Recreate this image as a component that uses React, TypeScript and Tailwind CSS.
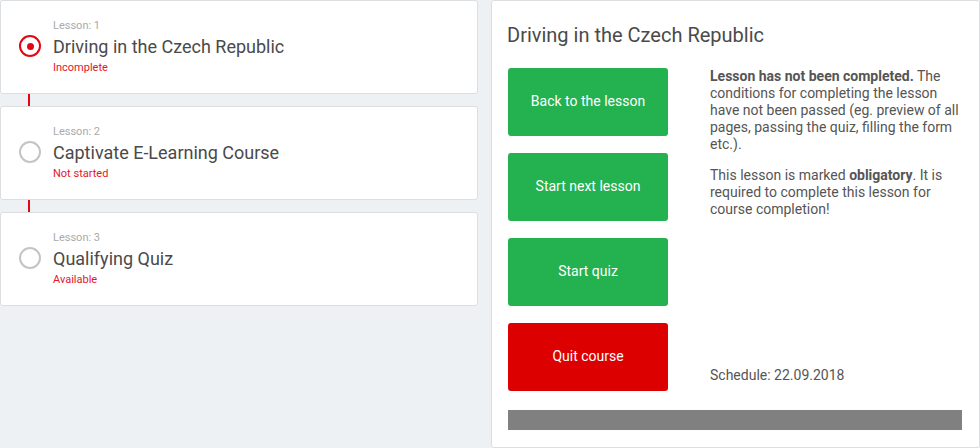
import React from 'react';

const FONT = { fontFamily: 'Roboto, "Liberation Sans", sans-serif' };

type Lesson = { no: number; title: string; status: string; active?: boolean };

const LESSONS: Lesson[] = [
  { no: 1, title: 'Driving in the Czech Republic', status: 'Incomplete', active: true },
  { no: 2, title: 'Captivate E-Learning Course', status: 'Not started' },
  { no: 3, title: 'Qualifying Quiz', status: 'Available' },
];

const Radio = ({ active }: { active?: boolean }) =>
  active ? (
    <span className="flex h-[22px] w-[22px] items-center justify-center rounded-full border-2 border-[#e30613]">
      <span className="h-[7px] w-[7px] rounded-full bg-[#e30613]" />
    </span>
  ) : (
    <span className="block h-[22px] w-[22px] rounded-full border-2 border-[#c4c4c4]" />
  );

const LessonCard = ({ lesson }: { lesson: Lesson }) => (
  <div className="flex h-[94px] items-center rounded-[3px] border border-[#dcdfe2] bg-white pb-[2px] pl-[18px]">
    <Radio active={lesson.active} />
    <div className="ml-[12px] flex flex-col">
      <span className="text-[11px] leading-[13px] text-[#aaaaaa]">Lesson: {lesson.no}</span>
      <span className="mt-[4px] text-[18px] leading-[22px] text-[#4a4a4a]">{lesson.title}</span>
      <span className="mt-[3px] text-[11px] leading-[13px] text-[#e5142b]">{lesson.status}</span>
    </div>
  </div>
);

const Connector = () => (
  <div className="h-[12px] pl-[28px]">
    <div className="h-full w-[2px] bg-[#e30613]" />
  </div>
);

const ActionButton = ({ label, danger }: { label: string; danger?: boolean }) => (
  <button
    className={`flex h-[68px] w-[160px] items-center justify-center rounded-[3px] pb-[1px] text-[14px] font-normal text-white ${
      danger ? 'bg-[#dd0000]' : 'bg-[#24b14f]'
    }`}>
    {label}
  </button>
);

export default function App() {
  return (
    <div className="flex h-[448px] w-[980px] gap-[13px] bg-[#eef1f4]" style={FONT}>
      {/* lesson list */}
      <div className="flex w-[478px] flex-col">
        {LESSONS.map((l, i) => (
          <React.Fragment key={l.no}>
            {i > 0 && <Connector />}
            <LessonCard lesson={l} />
          </React.Fragment>
        ))}
      </div>

      {/* detail panel */}
      <div className="flex h-[448px] w-[489px] flex-col rounded-[3px] border border-[#dcdfe2] bg-white pl-[15px] pr-[16px] pt-[22px]">
        <h1 className="text-[20px] leading-[24px] text-[#4a4a4a]">Driving in the Czech Republic</h1>

        <div className="mt-[21px] flex pl-[1px]">
          <div className="flex flex-col gap-[17px]">
            <ActionButton label="Back to the lesson" />
            <ActionButton label="Start next lesson" />
            <ActionButton label="Start quiz" />
            <ActionButton label="Quit course" danger />
          </div>

          <div className="ml-[42px] flex w-[254px] flex-col justify-between pb-[7px] text-[14px] leading-[17px] text-[#555555]">
            <div>
              <p className="mb-[14px]">
                <b className="font-bold">Lesson has not been completed.</b> The conditions for completing the
                lesson have not been passed (eg. preview of all pages, passing the quiz, filling the form etc.).
              </p>
              <p>
                This lesson is marked <b className="font-bold">obligatory</b>. It is required to complete this
                lesson for course completion!
              </p>
            </div>
            <p>Schedule: 22.09.2018</p>
          </div>
        </div>

        <div className="ml-[1px] mt-[19px] h-[20px] w-[454px] bg-[#808080]" />
      </div>
    </div>
  );
}
